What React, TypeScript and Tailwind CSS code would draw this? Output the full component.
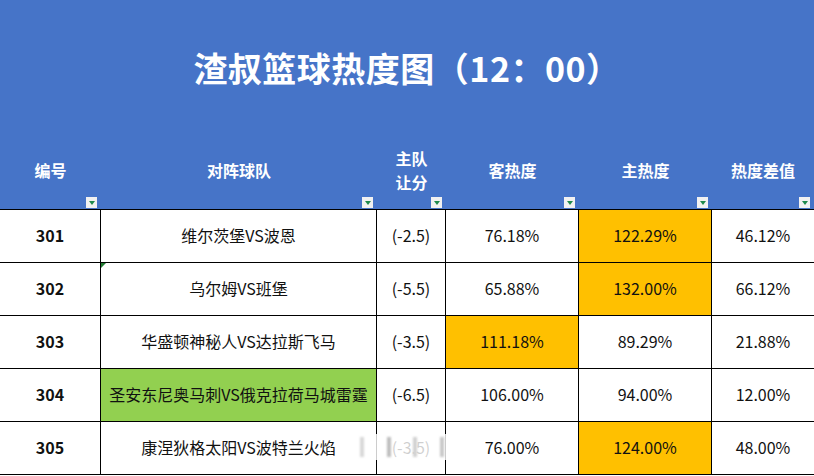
const cols = 'grid grid-cols-[101px_276px_69px_133px_133px_102px]'

type Row = {
  id: string
  match: string
  spread: string
  away: string
  home: string
  diff: string
  hot?: 'away' | 'home'
  green?: boolean
  mark?: boolean
}

const rows: Row[] = [
  { id: '301', match: '维尔茨堡VS波恩', spread: '(-2.5)', away: '76.18%', home: '122.29%', diff: '46.12%', hot: 'home' },
  { id: '302', match: '乌尔姆VS班堡', spread: '(-5.5)', away: '65.88%', home: '132.00%', diff: '66.12%', hot: 'home', mark: true },
  { id: '303', match: '华盛顿神秘人VS达拉斯飞马', spread: '(-3.5)', away: '111.18%', home: '89.29%', diff: '21.88%', hot: 'away' },
  { id: '304', match: '圣安东尼奥马刺VS俄克拉荷马城雷霆', spread: '(-6.5)', away: '106.00%', home: '94.00%', diff: '12.00%', green: true },
  { id: '305', match: '康涅狄格太阳VS波特兰火焰', spread: '(-3.5)', away: '76.00%', home: '124.00%', diff: '48.00%', hot: 'home' },
]

function Filter() {
  return (
    <span className="absolute right-[4px] bottom-[1px] flex h-[11px] w-[11px] items-center justify-center bg-[#f1f1f1]">
      <span className="h-0 w-0 border-x-[3px] border-t-[4px] border-x-transparent border-t-[#1f8a4c]" />
    </span>
  )
}

function Head({ children }: { children: React.ReactNode }) {
  return (
    <div className="relative flex items-center justify-center pb-[9px] text-center text-[16px] font-bold leading-[24px] text-white">
      <div>{children}</div>
      <Filter />
    </div>
  )
}

export default function App() {
  const cell = 'flex items-center justify-center pb-[3px] border-b border-r border-black text-[16px] text-[#111]'
  return (
    <div
      className="h-[476px] w-[814px] overflow-hidden bg-white"
      style={{ fontFamily: '"Noto Sans CJK SC", "Noto Sans", sans-serif' }}
    >
      <div className="bg-[#4674c8]">
        <div className="flex h-[140px] items-center justify-center pb-[6px] text-[34px] font-bold tracking-[0.5px] text-white">
          渣叔篮球热度图（12：00）
        </div>
        <div className={`${cols} h-[69px]`}>
          <Head>编号</Head>
          <Head>对阵球队</Head>
          <Head>
            主队
            <br />
            让分
          </Head>
          <Head>客热度</Head>
          <Head>主热度</Head>
          <Head>热度差值</Head>
        </div>
      </div>
      <div className="border-t border-black">
        {rows.map((r) => (
          <div key={r.id} className={`${cols} h-[53px]`}>
            <div className={`${cell} font-bold`}>{r.id}</div>
            <div className={`${cell} relative ${r.green ? 'bg-[#92d050]' : ''}`}>
              {r.mark && (
                <span className="absolute left-0 top-0 h-0 w-0 border-r-[5px] border-t-[5px] border-r-transparent border-t-[#1f7a30]" />
              )}
              {r.match}
            </div>
            <div className={`${cell} relative`}>
              {r.spread}
              {r.id === '305' && (
                <span className="absolute -left-[40px] top-[12px] flex h-[26px] w-[130px] items-center justify-around bg-white/80 px-3">
                  <span className="h-[20px] w-[4px] bg-[#d8d8d8] blur-[1px]" />
                  <span className="h-[20px] w-[4px] bg-[#bdbdbd] blur-[1px]" />
                  <span className="h-[20px] w-[4px] bg-[#d0d0d0] blur-[1px]" />
                  <span className="h-[20px] w-[4px] bg-[#c8c8c8] blur-[1px]" />
                </span>
              )}
            </div>
            <div className={`${cell} ${r.hot === 'away' ? 'bg-[#ffc000]' : ''}`}>{r.away}</div>
            <div className={`${cell} ${r.hot === 'home' ? 'bg-[#ffc000]' : ''}`}>{r.home}</div>
            <div className={`${cell} border-r-0`}>{r.diff}</div>
          </div>
        ))}
      </div>
    </div>
  )
}
